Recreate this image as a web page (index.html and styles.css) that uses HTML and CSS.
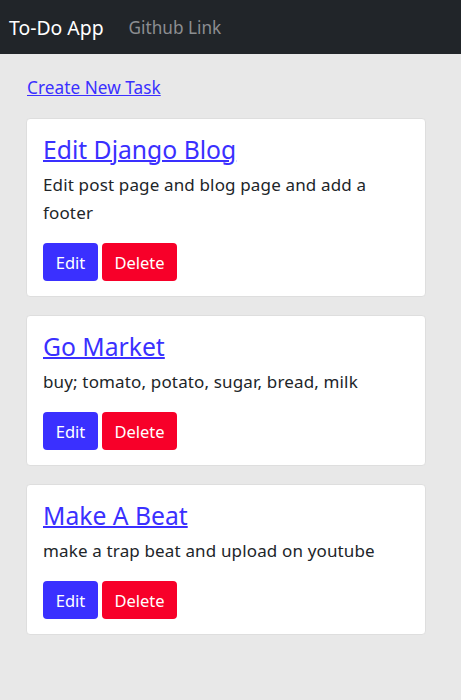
FILE: index.html
```html
<!DOCTYPE html>
<html lang="en">
<head>
<meta charset="utf-8">
<title>To-Do App</title>
<link rel="stylesheet" href="styles.css">
</head>
<body>
<nav class="navbar">
  <a class="brand" href="#">To-Do App</a>
  <a class="nav-link" href="#">Github Link</a>
</nav>
<main class="container">
  <a class="create" href="#">Create New Task</a>
  <div class="card">
    <h2 class="title"><a href="#">Edit Django Blog</a></h2>
    <p class="desc">Edit post page and blog page and add a footer</p>
    <div class="actions">
      <a class="btn btn-edit" href="#">Edit</a>
      <a class="btn btn-delete" href="#">Delete</a>
    </div>
  </div>
  <div class="card">
    <h2 class="title"><a href="#">Go Market</a></h2>
    <p class="desc">buy; tomato, potato, sugar, bread, milk</p>
    <div class="actions">
      <a class="btn btn-edit" href="#">Edit</a>
      <a class="btn btn-delete" href="#">Delete</a>
    </div>
  </div>
  <div class="card">
    <h2 class="title"><a href="#">Make A Beat</a></h2>
    <p class="desc">make a trap beat and upload on youtube</p>
    <div class="actions">
      <a class="btn btn-edit" href="#">Edit</a>
      <a class="btn btn-delete" href="#">Delete</a>
    </div>
  </div>
</main>
</body>
</html>
```
FILE: styles.css
```css
* { box-sizing: border-box; }
html, body { margin: 0; padding: 0; }
body {
  font-family: "Noto Sans", "Open Sans", sans-serif;
  font-size: 16px;
  color: #212529;
  background: #e8e8e8;
  min-height: 700px;
}
.navbar {
  height: 54px;
  background: #212529;
  display: flex;
  align-items: center;
  padding: 0 9px;
  gap: 25px;
}
.brand {
  color: #ffffff;
  font-size: 19.4px;
  text-decoration: none;
}
.nav-link {
  color: #8c8e91;
  font-size: 17.2px;
  text-decoration: none;
}
.container {
  padding: 22px 35px 0 26px;
  display: flex;
  flex-direction: column;
}
.create {
  align-self: flex-start;
  margin-left: 1px;
  color: #3a30ff;
  font-size: 17.2px;
  letter-spacing: 0.05px;
  line-height: 24px;
  margin-bottom: 18px;
}
.card {
  background: #ffffff;
  border: 1px solid #dedede;
  border-radius: 4px;
  padding: 16px 16px 15px;
  margin-bottom: 18px;
}
.title {
  margin: 0 0 6px;
  font-size: 24.7px;
  font-weight: 400;
  line-height: 30px;
}
.title a {
  color: #3a30ff;
  text-decoration-thickness: 2px;
}
.desc {
  margin: 0 0 16px;
  font-size: 17px;
  letter-spacing: 0.15px;
  line-height: 28px;
}
.actions {
  display: flex;
  gap: 4px;
}
.btn {
  display: inline-flex;
  align-items: center;
  justify-content: center;
  height: 38px;
  padding: 0 12px;
  border-radius: 4px;
  color: #ffffff;
  text-decoration: none;
  font-size: 16.5px;
}
.btn-edit { background: #3a30ff; width: 55px; }
.btn-delete { background: #f70029; width: 75px; }
```
